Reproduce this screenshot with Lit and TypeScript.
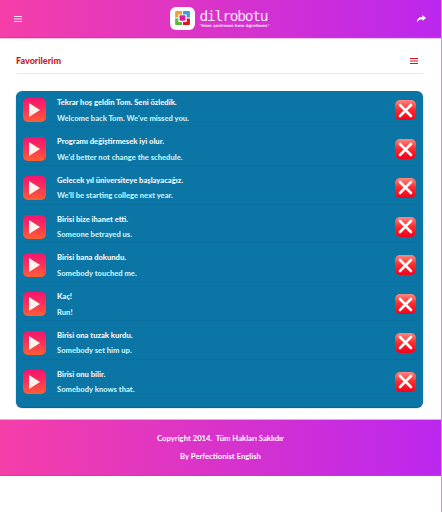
import { LitElement, html, css, svg } from "lit";
import { customElement } from "lit/decorators.js";

const rows = [
  ["Tekrar hoş geldin Tom. Seni özledik.", "Welcome back Tom. We've missed you."],
  ["Programı değiştirmesek iyi olur.", "We'd better not change the schedule."],
  ["Gelecek yıl üniversiteye başlayacağız.", "We'll be starting college next year."],
  ["Birisi bize ihanet etti.", "Someone betrayed us."],
  ["Birisi bana dokundu.", "Somebody touched me."],
  ["Kaç!", "Run!"],
  ["Birisi ona tuzak kurdu.", "Somebody set him up."],
  ["Birisi onu bilir.", "Somebody knows that."],
];

const burger = html`<svg width="8" height="6" viewBox="0 0 8 6"><path d="M0 .5h8M0 3h8M0 5.500h8" stroke="currentColor" stroke-width="1.1"/></svg>`;

@customElement("app-root")
export class AppRoot extends LitElement {
  static styles = css`
    :host { display: block; width: 441px; height: 512px; border-right: 1px solid #b8a4b4; background: #fff; font-family: "Lato", sans-serif; }
    .grad { background: linear-gradient(90deg, #f53ea8, #bb27ee); color: #fff; }
    header { height: 38px; box-sizing: border-box; display: flex; align-items: center; justify-content: space-between; padding: 0 15px 0 14px; border-bottom: 1px solid #e02bd0; box-shadow: 0 1px 0 #edc4e6; }
    .brand { display: flex; gap: 5px; align-items: flex-start; margin-bottom: 1px; }
    .logo { width: 25px; height: 23px; border-radius: 6px; background: #fff; display: flex; align-items: center; justify-content: center; }
    .bt { display: flex; flex-direction: column; align-items: flex-start; padding-top: 2px; }
    .name { font: 400 14.5px/14px "DejaVu Sans Mono", monospace; letter-spacing: -1.2px; color: #f8e4f8; }
    .tag { font: 700 3.95px/5px "DejaVu Sans", sans-serif; color: #f6e0f4; }
    .title { margin: 0 18px 0 16px; height: 36px; box-sizing: border-box; padding-top: 16px; display: flex; align-items: flex-start; justify-content: space-between; border-bottom: 1px solid #ececec; color: #d0161e; font: 900 9px/14px "Lato", sans-serif; }
    .title .ic { margin: 4px 5px 0 0; display: flex; }
    .card { margin: 17px 18px 0 16px; background: #0b76a6; border-radius: 6px; height: 316px; box-sizing: border-box; padding: 0 7px; box-shadow: 0 1px 1px #0a4a68; }
    .row { height: 38.8px; box-sizing: border-box; padding-top: 10px; display: flex; align-items: flex-start; border-bottom: 1px solid #0a6f9c; }
    .row:first-child { height: 36px; padding-top: 7px; }
    .play { width: 23px; height: 24px; border-radius: 5px; background: linear-gradient(180deg, #f5146e 0%, #fb3258 50%, #ff6030 100%); display: flex; align-items: center; justify-content: center; flex: none; }
    .txt { flex: 1; margin-left: 11px; display: flex; flex-direction: column; gap: 6.500px; font: 900 7.6px/9px "Lato", sans-serif; }
    .tr { color: #f2f6f8; }
    .en { color: #c4f0f6; }
    .x { width: 21px; height: 20px; margin-top: 2px; border-radius: 5px; background: linear-gradient(180deg, #fa8a84, #fb3030 45%, #f4001a); display: flex; align-items: center; justify-content: center; flex: none; }
    footer { margin-top: 12px; height: 57px; box-sizing: border-box; border-top: 1px solid #e8a8dc; border-bottom: 1px solid #e02bd0; display: flex; flex-direction: column; align-items: center; gap: 8px; padding-top: 13px; font: 700 7.7px/10px "Lato", sans-serif; color: #fbe4f6; white-space: pre; }
    .mi { display: flex; color: #f6e0f4; }
  `;

  render() {
    return html`
      <header class="grad">
        <span class="mi">${burger}</span>
        <div class="brand">
          <div class="logo">
            <svg width="19" height="18" viewBox="0 0 18 18" fill="none" preserveAspectRatio="none">
              <path d="M9.500 2H15a1 1 0 0 1 1 1V8.500H13V5.500H9.500z" fill="#3a9fd8"/>
              <path d="M8.500 2H3a1 1 0 0 0-1 1V8.500H5V5.500H8.500z" fill="#f0a030"/>
              <path d="M2 9.500V15a1 1 0 0 0 1 1H8.500V13H5V9.500z" fill="#5cb83c"/>
              <path d="M16 9.500V15a1 1 0 0 1-1 1H9.500V13H13V9.500z" fill="#d81818"/>
              <rect x="6.200" y="6.200" width="5.600" height="5.600" rx="1" fill="#d820a0"/>
            </svg>
          </div>
          <div class="bt">
            <span class="name">dilrobotu</span>
            <span class="tag">"Hem çevirmen hem öğretmen"</span>
          </div>
        </div>
        <svg width="9" height="8" viewBox="0 0 9 8"><path d="M5.500 0L9 3 5.500 6V4.200C3 4.200 1.200 5 0 7.500 0 4 2 1.900 5.500 1.800z" fill="#fff"/></svg>
      </header>
      <div class="title">
        <span>Favorilerim</span>
        <span class="ic">${burger}</span>
      </div>
      <div class="card">
        ${rows.map(([a, b]) => html`
          <div class="row">
            <div class="play"><svg width="11" height="14" viewBox="0 0 11 14"><path d="M0 0L11 7 0 14z" fill="#fdf4ee"/></svg></div>
            <div class="txt"><span class="tr">${a}</span><span class="en">${b}</span></div>
            <div class="x"><svg width="15" height="15" viewBox="0 0 15 15">${svg`<path d="M2 2L13 13M13 2L2 13" stroke="#fff" stroke-width="2.6" stroke-linecap="round"/>`}</svg></div>
          </div>`)}
      </div>
      <footer class="grad">
        <span>Copyright 2014.  Tüm Hakları Saklıdır</span>
        <span>By Perfectionist English</span>
      </footer>
    `;
  }
}
